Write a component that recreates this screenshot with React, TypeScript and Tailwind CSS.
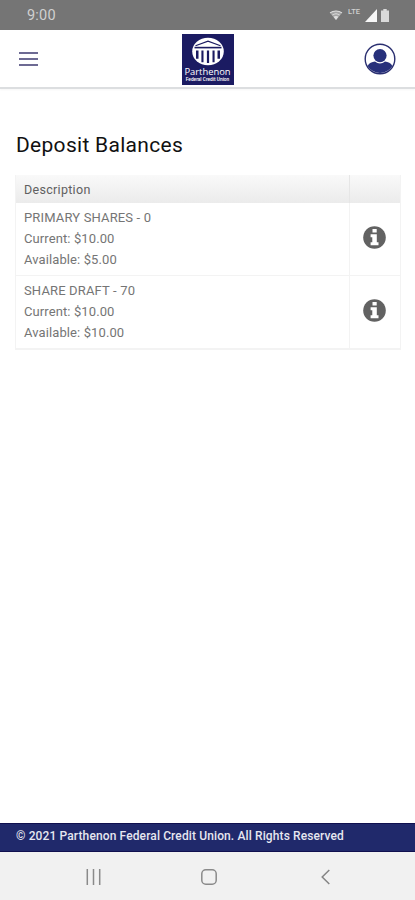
import React from 'react';

interface Account {
  name: string;
  current: string;
  available: string;
}

const accounts: Account[] = [
  { name: 'PRIMARY SHARES - 0', current: '$10.00', available: '$5.00' },
  { name: 'SHARE DRAFT - 70', current: '$10.00', available: '$10.00' },
];

const StatusBar: React.FC = () => (
  <div className="flex h-[30px] items-center bg-[#757575] pl-[27px] pr-[26px] text-[#d0d0d0]">
    <span className="pt-[2px] text-[14.5px] leading-none tracking-[0.2px]">9:00</span>
    <svg className="mb-px ml-auto h-[12px] w-[14px]" viewBox="0 0 15 13" fill="none">
      <path d="M1 4.3C4.8 1.2 10.2 1.2 14 4.3L7.5 12z" fill="#a5a5a5" />
      <path d="M1 4.3c3.8-3 9.2-3 13 0M3.6 6.6c2.3-1.8 5.5-1.8 7.8 0" stroke="#dedede" strokeWidth="1.1" />
      <path d="M4.8 8.3c1.6-1 3.8-1 5.4 0L7.5 11.8z" fill="#dedede" />
    </svg>
    <span className="mb-[6px] ml-[5px] w-[13px] text-[7.5px] font-medium leading-none">LTE</span>
    <svg className="ml-[4px] h-[13px] w-[12px]" viewBox="0 0 12 13">
      <path d="M12 0v13H0z" fill="#f7f7f7" />
    </svg>
    <svg className="ml-[4px] h-[13px] w-[8px]" viewBox="0 0 8 13">
      <path d="M2.3 0h3.4v1.5H8V13H0V1.5h2.3z" fill="#dadada" />
    </svg>
  </div>
);

const Logo: React.FC = () => (
  <div className="flex h-[51px] w-[52px] flex-col items-center bg-[#1b1b62] pt-[3px] text-white">
    <svg className="h-[29px] w-[34px] shrink-0" viewBox="0 0 34 29">
      <ellipse cx="17" cy="14.5" rx="15.8" ry="13.8" fill="#fff" />
      <path d="M4.5 8.8L17 4.2l12.5 4.6" fill="none" stroke="#1b1b62" strokeWidth="1.2" />
      <path d="M3.5 9.8h27v1.6h-27z" fill="#1b1b62" />
      <path d="M5 13.4h2.5v8.4H5zM10.4 13.4h2.1v11.8h-2.1zM15.9 13.4h2.2v12.6h-2.2zM21.5 13.4h2.1v11.8h-2.1zM26.5 13.4h2.5v8.4h-2.5z" fill="#1b1b62" />
    </svg>
    <span className="whitespace-nowrap font-['Open_Sans',sans-serif] text-[9.4px] leading-[11px]">Parthenon</span>
    <span className="whitespace-nowrap text-[4.8px] font-medium leading-[5px]">Federal Credit Union</span>
  </div>
);

const Header: React.FC = () => (
  <header className="flex h-[59px] items-start justify-between border-b-2 border-[#dcdee0] bg-white pl-[19px] pr-[18px] pt-[4px] shadow-[0_1px_2px_rgba(0,0,0,0.04)]">
    <button type="button" aria-label="Menu" className="flex h-[49px] w-[33px] flex-col justify-center gap-[4px]">
      <span className="h-[2px] w-[19px] bg-[#6d6a93]" />
      <span className="h-[2px] w-[19px] bg-[#6d6a93]" />
      <span className="h-[2px] w-[19px] bg-[#6d6a93]" />
    </button>
    <Logo />
    <button type="button" aria-label="Profile" className="flex h-[50px] w-[34px] items-center justify-center">
      <svg className="h-[32px] w-[32px]" viewBox="0 0 32 32">
        <circle cx="16" cy="16" r="14.8" fill="#fff" stroke="#2a2f70" strokeWidth="1.4" />
        <circle cx="16" cy="12.6" r="6.6" fill="#27307b" />
        <path d="M3.6 23C5 20.2 8 19 11 18.6c2.9 2.5 7.1 2.5 10 0 3 .4 6 1.6 7.4 4.4A14.5 14.5 0 0 1 3.6 23z" fill="#27307b" />
      </svg>
    </button>
  </header>
);

const InfoIcon: React.FC = () => (
  <svg className="h-[23px] w-[23px]" viewBox="0 0 23 23">
    <circle cx="11.5" cy="11.5" r="11.3" fill="#626262" />
    <path d="M9.5 3h4.2v3.6H9.5zM7.6 8.3h6.2v7.9h1.7v3H7.6v-3h1.7v-4.9H7.6z" fill="#fff" />
  </svg>
);

const AccountRow: React.FC<{ account: Account }> = ({ account }) => (
  <div className="flex h-[73px] border-b border-[#f3f3f3]">
    <div className="flex-1 pl-[8px] pt-[4px] text-[13px] leading-[21px] tracking-[0.1px] text-[#757575]">
      <p className="tracking-[0.15px]">{account.name}</p>
      <p>Current: {account.current}</p>
      <p>Available: {account.available}</p>
    </div>
    <div className="flex w-[51px] items-center justify-center border-l border-[#f3f3f3] pb-[3px] pr-[2px]">
      <InfoIcon />
    </div>
  </div>
);

const App: React.FC = () => {
  return (
    <div className="flex h-[900px] w-[415px] flex-col overflow-hidden bg-white font-[Roboto,sans-serif]">
      <StatusBar />
      <Header />

      <main className="flex-1 pl-[15px] pr-[14px] pt-[42px]">
        <h1 className="pl-px text-[21px] leading-[28px] tracking-[0.3px] text-[#111]">Deposit Balances</h1>

        <section className="mt-[16px] border border-t-0 border-[#f3f3f3]">
          <div className="flex h-[28px] bg-linear-to-b from-[#f9f9f9] to-[#ebebeb]">
            <h2 className="flex-1 pl-[8px] text-[12.5px] leading-[29px] tracking-[0.3px] text-[#606060]">Description</h2>
            <div className="w-[51px] border-l border-[#e6e6e6]" />
          </div>
          {accounts.map(account => (
            <AccountRow key={account.name} account={account} />
          ))}
        </section>
      </main>

      <footer className="h-[29px] border-y border-[#10104f] bg-[#20296b] pl-[16px] text-[12px] font-medium leading-[24px] tracking-[0.12px] text-[#e6e7f0]">
        © 2021 Parthenon Federal Credit Union. All Rights Reserved
      </footer>

      <nav className="flex h-[48px] items-center bg-[#f1f1f1] pl-[86px] pt-px">
        <svg className="h-[16px] w-[15px]" viewBox="0 0 15 16" stroke="#8a8a8a" strokeWidth="1.5">
          <path d="M1.3 0v16M7.5 0v16M13.7 0v16" />
        </svg>
        <svg className="ml-[100px] h-[16px] w-[16px]" viewBox="0 0 16 16" fill="none" stroke="#8a8a8a" strokeWidth="1.5">
          <rect x="0.8" y="0.8" width="14.4" height="14.4" rx="4" />
        </svg>
        <svg className="ml-[104px] h-[16px] w-[9px]" viewBox="0 0 9 16" fill="none" stroke="#858585" strokeWidth="1.5">
          <path d="M8.3 1L1.2 8l7.1 7" />
        </svg>
      </nav>
    </div>
  );
};

export default App;
